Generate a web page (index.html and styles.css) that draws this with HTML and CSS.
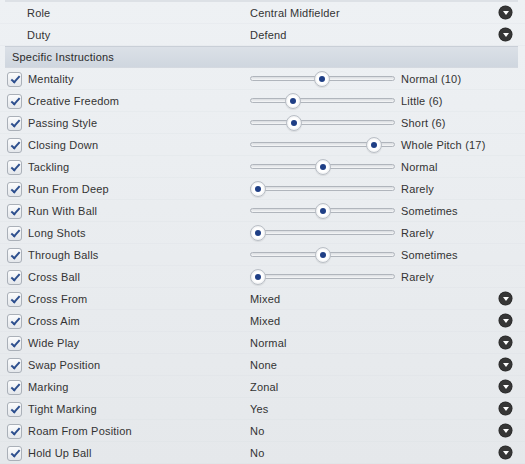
FILE: index.html
```html
<!DOCTYPE html>
<html>
<head>
<meta charset="utf-8">
<link rel="stylesheet" href="styles.css">
</head>
<body>
<div class="panel">
  <div class="topcap"></div>
  <div class="row">
    <div class="label plain">Role</div>
    <div class="value">Central Midfielder</div>
    <span class="drop"></span>
  </div>
  <div class="row">
    <div class="label plain">Duty</div>
    <div class="value">Defend</div>
    <span class="drop"></span>
  </div>
  <div class="header">Specific Instructions</div>

  <div class="row"><div class="label"><span class="cb"></span>Mentality</div><div class="slider"><span class="thumb" style="left:71px"></span></div><div class="sval">Normal (10)</div></div>
  <div class="row"><div class="label"><span class="cb"></span>Creative Freedom</div><div class="slider"><span class="thumb" style="left:42px"></span></div><div class="sval">Little (6)</div></div>
  <div class="row"><div class="label"><span class="cb"></span>Passing Style</div><div class="slider"><span class="thumb" style="left:43px"></span></div><div class="sval">Short (6)</div></div>
  <div class="row"><div class="label"><span class="cb"></span>Closing Down</div><div class="slider"><span class="thumb" style="left:123px"></span></div><div class="sval">Whole Pitch (17)</div></div>
  <div class="row"><div class="label"><span class="cb"></span>Tackling</div><div class="slider"><span class="thumb" style="left:72px"></span></div><div class="sval">Normal</div></div>
  <div class="row"><div class="label"><span class="cb"></span>Run From Deep</div><div class="slider"><span class="thumb" style="left:7px"></span></div><div class="sval">Rarely</div></div>
  <div class="row"><div class="label"><span class="cb"></span>Run With Ball</div><div class="slider"><span class="thumb" style="left:72px"></span></div><div class="sval">Sometimes</div></div>
  <div class="row"><div class="label"><span class="cb"></span>Long Shots</div><div class="slider"><span class="thumb" style="left:7px"></span></div><div class="sval">Rarely</div></div>
  <div class="row"><div class="label"><span class="cb"></span>Through Balls</div><div class="slider"><span class="thumb" style="left:72px"></span></div><div class="sval">Sometimes</div></div>
  <div class="row"><div class="label"><span class="cb"></span>Cross Ball</div><div class="slider"><span class="thumb" style="left:7px"></span></div><div class="sval">Rarely</div></div>

  <div class="row"><div class="label"><span class="cb"></span>Cross From</div><div class="value">Mixed</div><span class="drop"></span></div>
  <div class="row"><div class="label"><span class="cb"></span>Cross Aim</div><div class="value">Mixed</div><span class="drop"></span></div>
  <div class="row"><div class="label"><span class="cb"></span>Wide Play</div><div class="value">Normal</div><span class="drop"></span></div>
  <div class="row"><div class="label"><span class="cb"></span>Swap Position</div><div class="value">None</div><span class="drop"></span></div>
  <div class="row"><div class="label"><span class="cb"></span>Marking</div><div class="value">Zonal</div><span class="drop"></span></div>
  <div class="row"><div class="label"><span class="cb"></span>Tight Marking</div><div class="value">Yes</div><span class="drop"></span></div>
  <div class="row"><div class="label"><span class="cb"></span>Roam From Position</div><div class="value">No</div><span class="drop"></span></div>
  <div class="row"><div class="label"><span class="cb"></span>Hold Up Ball</div><div class="value">No</div><span class="drop"></span></div>
</div>
</body>
</html>
```
FILE: styles.css
```css
html, body {
  margin: 0;
  padding: 0;
}
body {
  width: 525px;
  height: 464px;
  overflow: hidden;
  background: linear-gradient(#eef1f4, #e5e8eb);
  font-family: "Liberation Sans", Arial, sans-serif;
  font-size: 11px;
  color: #333333;
  letter-spacing: 0.2px;
}
.panel {
  display: flex;
  flex-direction: column;
}
.topcap {
  height: 2px;
  margin: 0 7px 0 5px;
  background: #dde1e6;
}
.row {
  height: 22px;
  display: flex;
  align-items: center;
  padding-right: 13px;
  box-sizing: border-box;
  border-bottom: 1px solid rgba(210, 214, 220, 0.18);
}
.label {
  width: 250px;
  flex: none;
  display: flex;
  align-items: center;
  gap: 6px;
  padding-left: 7px;
  box-sizing: border-box;
  padding-top: 1px;
}
.label.plain {
  padding-left: 27px;
}
.value {
  flex: 1;
  padding-top: 1px;
}
.header {
  height: 22px;
  margin: 0 7px 0 5px;
  padding-left: 7px;
  box-sizing: border-box;
  display: flex;
  align-items: center;
  background: linear-gradient(#dbe0e7, #cfd6df);
  border-top: 1px solid #c9cfd7;
  border-bottom: 1px solid #d4d9e0;
  color: #2a2a2a;
}
.cb {
  width: 13px;
  height: 13px;
  flex: none;
  border: 1px solid #aab0b8;
  border-radius: 3px;
  background: linear-gradient(#fbfcfd, #e4e7eb);
  position: relative;
  box-sizing: content-box;
}
.cb::after {
  content: "";
  position: absolute;
  left: 3px;
  top: 3px;
  width: 7px;
  height: 3px;
  border-left: 2px solid #2d4f8e;
  border-bottom: 2px solid #2d4f8e;
  transform: rotate(-48deg);
  transform-origin: center;
}
.drop {
  width: 13px;
  height: 13px;
  border-radius: 50%;
  background: #363636;
  flex: none;
  position: relative;
  box-shadow: 0 0 0 0.5px #222;
}
.drop::after {
  content: "";
  position: absolute;
  left: 3.5px;
  top: 4.5px;
  border-left: 3px solid transparent;
  border-right: 3px solid transparent;
  border-top: 4px solid #ffffff;
}
.slider {
  width: 145px;
  height: 5px;
  flex: none;
  border: 1px solid #b0b5bc;
  border-radius: 3px;
  background: linear-gradient(#d9dce0, #f6f7f8);
  position: relative;
  box-sizing: border-box;
}
.thumb {
  position: absolute;
  top: -6.5px;
  width: 16px;
  height: 16px;
  margin-left: -8px;
  border-radius: 50%;
  background: radial-gradient(circle, #ffffff 50%, #d5d9de 100%);
  border: 1px solid #babfc6;
  box-sizing: border-box;
  box-shadow: 0 1px 1px rgba(0, 0, 0, 0.08);
}
.thumb::after {
  content: "";
  position: absolute;
  left: 4px;
  top: 4px;
  width: 6px;
  height: 6px;
  border-radius: 50%;
  background: #1f3f86;
}
.sval {
  margin-left: 6px;
  padding-top: 1px;
}
```
